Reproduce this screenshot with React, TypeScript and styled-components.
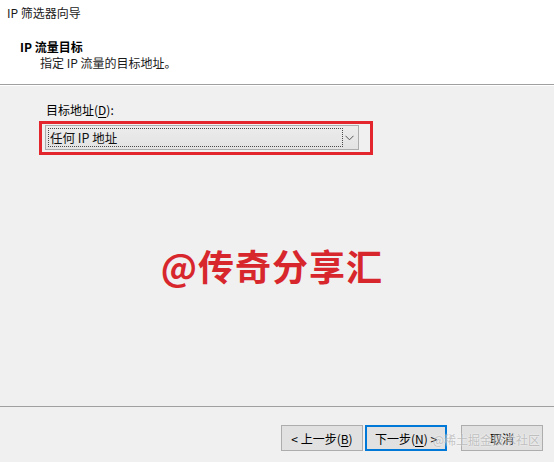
import React from 'react';
import styled, { createGlobalStyle } from 'styled-components';

const GlobalStyle = createGlobalStyle`
    html, body {
        margin: 0;
        padding: 0;
        background: #f0f0f0;
    }
    body {
        font-family: "Noto Sans CJK SC", "Noto Sans", "Liberation Sans", sans-serif;
        font-size: 12px;
        color: #000;
    }
`;

const Window = styled.div`
    position: relative;
    width: 554px;
    height: 462px;
    display: flex;
    flex-direction: column;
    background: #f0f0f0;
    overflow: hidden;
`;

const Header = styled.div`
    height: 85px;
    background: #ffffff;
    border-bottom: 1px solid #a0a0a0;
    display: flex;
    flex-direction: column;
    box-sizing: border-box;
    padding: 4px 0 0 7px;
`;

const Caption = styled.div`
    font-size: 12px;
    line-height: 18px;
    color: #1a1a1a;
`;

const StepTitle = styled.div`
    margin: 17px 0 0 13px;
    font-size: 12px;
    font-weight: bold;
    line-height: 16px;
`;

const StepText = styled.div`
    margin: 0 0 0 33px;
    font-size: 12px;
    line-height: 16px;
    color: #1a1a1a;
`;

const Body = styled.div`
    flex: 1;
    display: flex;
    flex-direction: column;
    padding: 15px 0 0 39px;
    border-top: 1px solid #ffffff;
`;

const FieldLabel = styled.div`
    margin-left: 7px;
    font-size: 12px;
    line-height: 18px;
    u {
        text-underline-offset: 2px;
    }
`;

const Highlight = styled.div`
    width: 334px;
    box-sizing: border-box;
    border: 3px solid #e3262e;
    padding: 1px 11px 2px 3px;
    margin-top: 2px;
`;

const Combo = styled.div`
    height: 25px;
    box-sizing: border-box;
    border: 1px solid #acacac;
    background: linear-gradient(#ececec, #e3e3e3);
    display: flex;
    align-items: stretch;
    padding: 2px;
`;

const ComboValue = styled.div`
    flex: 1;
    border: 1px dotted #4a4a4a;
    display: flex;
    align-items: center;
    padding-left: 1px;
    font-size: 12.5px;
    color: #111;
`;

const ComboArrow = styled.div`
    width: 13px;
    display: flex;
    align-items: center;
    justify-content: center;
`;

const Watermark = styled.div`
    margin: 88px 0 0 -39px;
    text-align: center;
    padding-right: 10px;
    font-size: 36px;
    font-weight: bold;
    line-height: 44px;
    color: #d8262d;
    letter-spacing: 1px;
`;

const Footer = styled.div`
    height: 56px;
    box-sizing: border-box;
    border-top: 1px solid #a0a0a0;
    display: flex;
    justify-content: flex-end;
    align-items: flex-start;
    padding: 18px 11px 0 0;
`;

const Button = styled.button<{ $primary?: boolean; $gap?: number }>`
    width: 82px;
    height: 26px;
    margin-left: ${p => p.$gap ?? 0}px;
    box-sizing: border-box;
    border: ${p => (p.$primary ? '2px solid #0078d7' : '1px solid #adadad')};
    background: #e1e1e1;
    font-family: "Noto Sans CJK SC", "Noto Sans", "Liberation Sans", sans-serif;
    font-size: 12px;
    color: #000;
    padding: 0;
    display: flex;
    align-items: center;
    justify-content: center;
    u {
        text-underline-offset: 2px;
    }
`;

const SiteMark = styled.div`
    position: absolute;
    right: 14px;
    bottom: 14px;
    font-size: 12px;
    line-height: 16px;
    color: rgba(150, 150, 150, 0.55);
    text-shadow: 0 0 2px rgba(255, 255, 255, 0.9);
    pointer-events: none;
`;

const Chevron = () => (
    <svg width="9" height="6" viewBox="0 0 9 6">
        <path d="M0.5 0.8 L4.5 4.8 L8.5 0.8" fill="none" stroke="#555" strokeWidth="1" />
    </svg>
);

export default function App() {
    return (
        <Window>
            <GlobalStyle />
            <Header>
                <Caption>IP 筛选器向导</Caption>
                <StepTitle>IP 流量目标</StepTitle>
                <StepText>指定 IP 流量的目标地址。</StepText>
            </Header>
            <Body>
                <FieldLabel>
                    目标地址(<u>D</u>):
                </FieldLabel>
                <Highlight>
                    <Combo>
                        <ComboValue>任何 IP 地址</ComboValue>
                        <ComboArrow>
                            <Chevron />
                        </ComboArrow>
                    </Combo>
                </Highlight>
                <Watermark>@传奇分享汇</Watermark>
            </Body>
            <Footer>
                <Button>
                    &lt; 上一步(<u>B</u>)
                </Button>
                <Button $primary $gap={2}>
                    下一步(<u>N</u>) &gt;
                </Button>
                <Button $gap={14}>取消</Button>
            </Footer>
            <SiteMark>@稀土掘金技术社区</SiteMark>
        </Window>
    );
}
